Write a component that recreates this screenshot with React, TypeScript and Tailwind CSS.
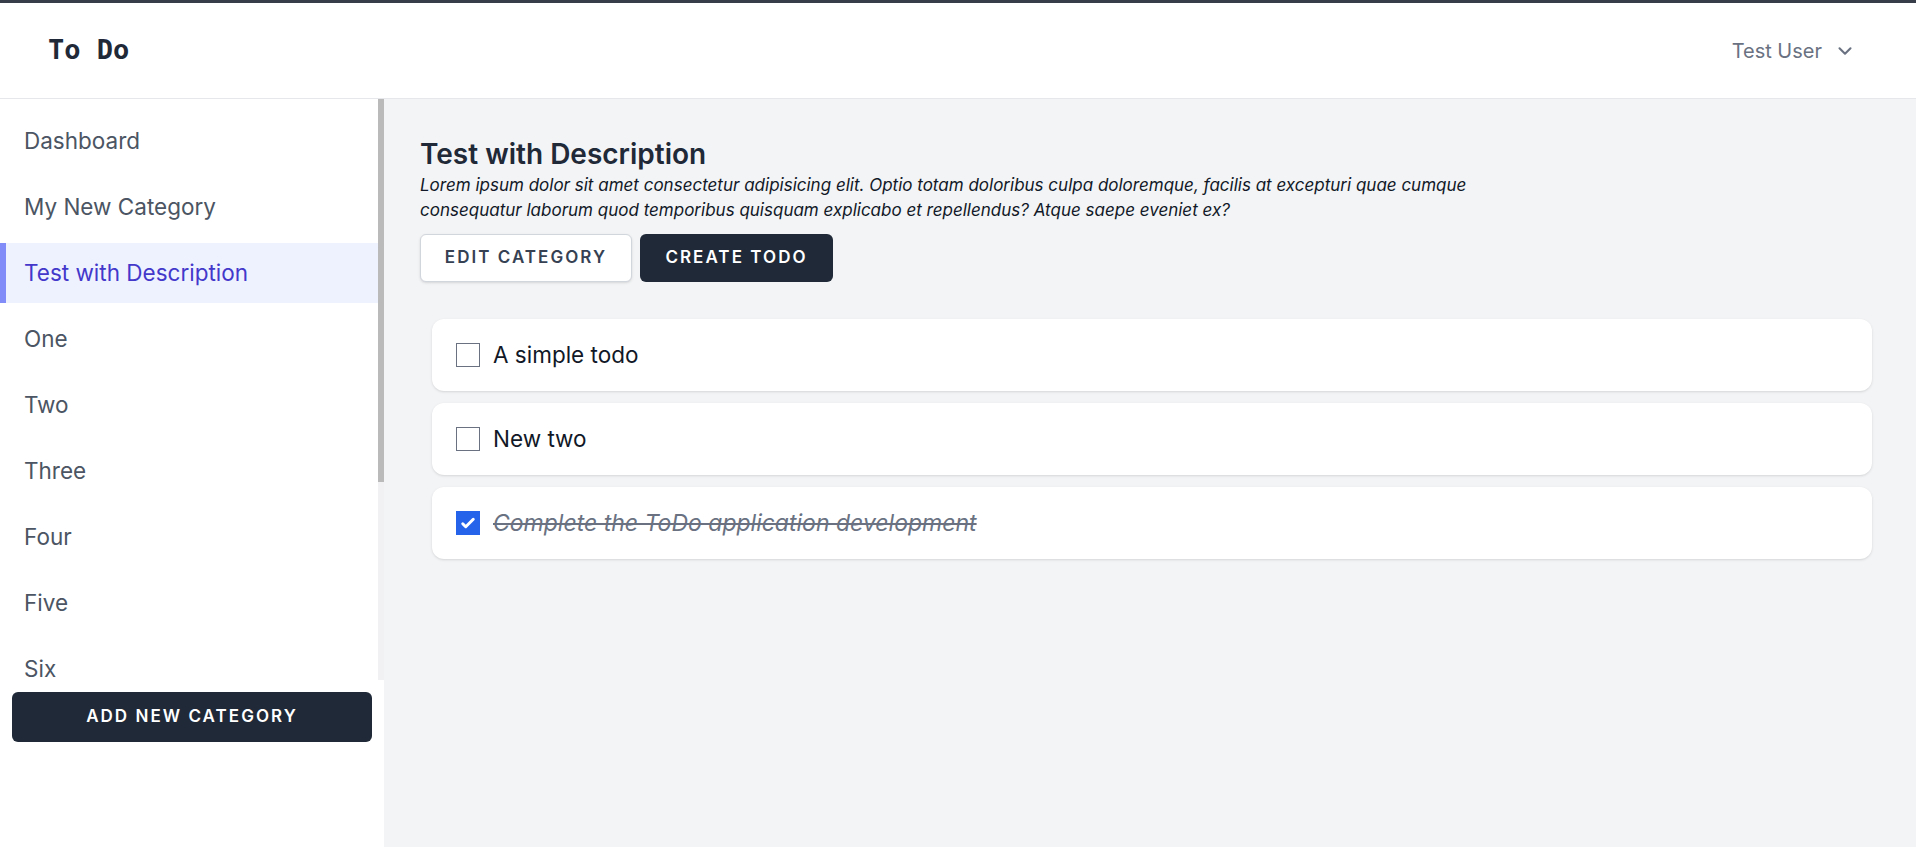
import { ChevronDown } from 'lucide-react';

const categories = [
  'Dashboard',
  'My New Category',
  'Test with Description',
  'One',
  'Two',
  'Three',
  'Four',
  'Five',
  'Six',
  'Seven',
  'Eight',
  'Nine',
  'Ten',
];

const todos = [
  { id: 1, title: 'A simple todo', done: false },
  { id: 2, title: 'New two', done: false },
  { id: 3, title: 'Complete the ToDo application development', done: true },
];

const active = 'Test with Description';

export default function App() {
  return (
    <div className="flex h-screen flex-col bg-white font-['Inter',sans-serif]">
      {/* Header */}
      <header className="flex h-[99px] shrink-0 items-center justify-between border-t-[3px] border-b border-t-[#373e4a] border-b-gray-200 bg-white pl-12 pr-[60px]">
        <span className="font-['DejaVu_Sans_Mono',monospace] text-[27px] font-bold text-[#1f2937]">To Do</span>
        <button className="flex items-center gap-3 text-[20px] text-gray-500">
          Test User
          <ChevronDown className="h-[22px] w-[22px]" strokeWidth={2.3} />
        </button>
      </header>

      <div className="flex min-h-0 flex-1">
        {/* Sidebar */}
        <aside className="flex w-[384px] shrink-0 flex-col bg-white">
          <div className="flex h-[581px]">
            <nav className="flex flex-1 flex-col gap-[6px] overflow-hidden py-3">
              {categories.map((c) =>
                c === active ? (
                  <a
                    key={c}
                    href="#"
                    className="flex h-[60px] shrink-0 items-center border-l-[6px] border-[#818cf8] bg-[#eef2ff] pl-[18px] text-[22.5px] text-[#4338ca]"
                  >
                    {c}
                  </a>
                ) : (
                  <a key={c} href="#" className="flex h-[60px] shrink-0 items-center pl-6 text-[22.5px] text-[#4b5563]">
                    {c}
                  </a>
                )
              )}
            </nav>
            {/* scrollbar */}
            <div className="w-[6px] shrink-0 bg-[#f1f1f3]">
              <div className="h-[383px] bg-[#bababa]" />
            </div>
          </div>
          <div className="px-3 pt-3">
            <button className="h-[50px] w-full rounded-md bg-[#1f2937] text-[17px] font-semibold uppercase tracking-[0.12em] text-white">
              Add new category
            </button>
          </div>
        </aside>

        {/* Main */}
        <main className="flex-1 bg-[#f3f4f6] px-9 pt-[38px]">
          <h1 className="text-[28px] font-semibold leading-[34px] text-[#1f2937]">Test with Description</h1>
          <p className="mt-[2px] max-w-[1070px] text-[17px] italic leading-[24.5px] text-[#111827]">
            Lorem ipsum dolor sit amet consectetur adipisicing elit. Optio totam doloribus culpa doloremque, facilis at excepturi quae cumque consequatur laborum quod temporibus quisquam explicabo et repellendus? Atque saepe eveniet ex?
          </p>
          <div className="mt-3 flex gap-2">
            <button className="h-12 w-[212px] rounded-md border border-gray-300 bg-white text-[17px] font-semibold uppercase tracking-[0.12em] text-gray-700 shadow-sm">
              Edit category
            </button>
            <button className="h-12 w-[193px] rounded-md bg-[#1f2937] text-[17px] font-semibold uppercase tracking-[0.12em] text-white">
              Create todo
            </button>
          </div>

          <ul className="mt-[37px] flex flex-col gap-3 pl-3 pr-2">
            {todos.map((t) => (
              <li key={t.id} className="flex h-[72px] items-center gap-[13px] rounded-xl bg-white px-6 shadow-sm">
                {t.done ? (
                  <span className="flex h-6 w-6 items-center justify-center bg-[#2563eb]">
                    <svg viewBox="0 0 16 16" className="h-6 w-6" fill="white">
                      <path d="M12.207 4.793a1 1 0 010 1.414l-5 5a1 1 0 01-1.414 0l-2-2a1 1 0 011.414-1.414L6.5 9.086l4.293-4.293a1 1 0 011.414 0z" />
                    </svg>
                  </span>
                ) : (
                  <span className="h-6 w-6 border border-gray-500 bg-white" />
                )}
                <span
                  className={
                    t.done
                      ? 'text-[23px] italic text-gray-500 line-through'
                      : 'text-[22.5px] text-[#111827]'
                  }
                >
                  {t.title}
                </span>
              </li>
            ))}
          </ul>
        </main>
      </div>
    </div>
  );
}
